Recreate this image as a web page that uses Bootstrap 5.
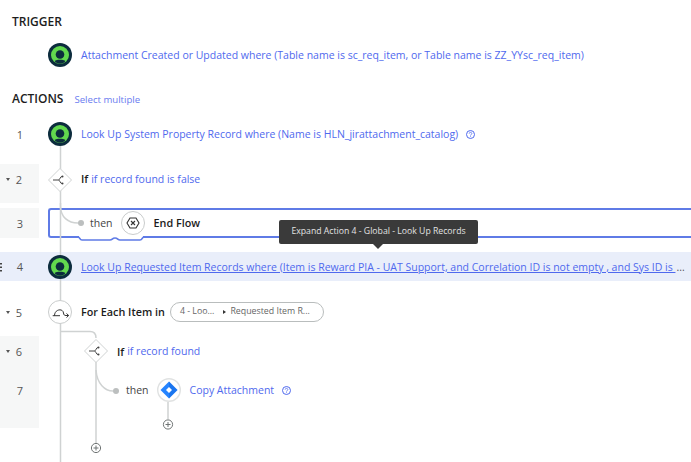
<!DOCTYPE html>
<html lang="en">
<head>
<meta charset="utf-8">
<title>Flow</title>
<link rel="stylesheet" href="https://cdn.jsdelivr.net/npm/bootstrap@5.3.0/dist/css/bootstrap.min.css">
<style>
html,body{width:691px;height:462px;overflow:hidden;background:#fff}
body{font-family:"Open Sans","Liberation Sans",sans-serif;font-size:10.5px;color:#2a2a2a}
.flow-page{width:691px;height:462px;overflow:hidden;padding-top:12px}
.sec-head{font-size:12px;font-weight:600;color:#1d1d1d;padding-left:12px;height:20px}
.sel-link{font-size:9.6px;color:#6a7cf0;margin-left:11px;padding-top:2px}
.flow-row{height:24px}
.num-col{width:39px;flex:none;align-self:stretch;color:#555;font-size:11px;padding-left:6px}
.caret-mark{width:7px;flex:none;display:block}
.caret-on{width:0;height:0;border-left:2.5px solid transparent;border-right:2.5px solid transparent;border-top:3px solid #555;margin-right:2px}
.num-val{width:12px;text-align:center;margin-left:1px;padding-top:2px}
.shade{background:#f6f7f7}
.node{width:24px;height:24px;flex:none;position:relative;z-index:2;display:block}
.gap-node{margin-left:9px}
.link-txt{color:#4f69ee;white-space:nowrap;margin-left:9px;padding-top:2px}
.bold-txt{font-weight:600;color:#1c1c1c;font-size:10.8px;margin-left:9px}
.if-txt{padding-top:2px}
.txt-tight{margin-left:3px}
.r-trig{margin-top:11px}.h-act{margin-top:22px}.r-1{margin-top:13px}
.r-2{margin-top:18px;height:39px}
.r-2>*{margin-bottom:8px}
.r-2>.num-col{margin-bottom:0;padding-bottom:8px}
.r-2>.link-txt,.r-2>.if-txt{padding-top:0}
.r-3{margin-top:5px;height:30px}
.r-4{margin-top:14px;height:29px;background:#e9eefa}
.r-5{margin-top:19px}
.r-6{margin-top:12px;height:30px}
.r-7{height:62px}
.r-7 .num-val,.r-7 .then-word,.r-7 .link-txt{padding-top:17px}
.r-7 .node{margin-top:12px}
.r-7 .help-ic{margin-top:20px}
.r-7 .then-word{margin-left:87px}
.r-7 .caret-mark{margin-top:20px}
.r-6 .node{margin-left:45px}
.endbox{flex:1;height:30px;margin-left:9px;border:2px solid #5f7be6;border-right:0;border-radius:3px 0 0 3px;padding-left:40px}
.endbox .if-txt{padding-top:0}
.then-word{color:#444;margin-right:8px;padding-top:2px}
.pill-ref{width:154px;height:20px;margin-left:5px;border:1px solid #b9bdbd;border-radius:10px;font-size:8.8px;color:#666;padding-left:9px;white-space:nowrap}
.tri-mark{width:0;height:0;border-top:2.5px solid transparent;border-bottom:2.5px solid transparent;border-left:3px solid #333;margin:0 4px 0 9px}
.lines{position:absolute;left:0;top:0;z-index:1}
.tip-box{position:absolute;left:279px;top:220px;width:199px;height:24px;background:#3a3a3a;border-radius:2px;color:#e2e2e2;font-size:8.7px;z-index:5;white-space:nowrap}
.tip-box::after{content:"";position:absolute;left:94px;top:24px;border:5px solid transparent;border-top-color:#3a3a3a;border-bottom:0}
.grip{position:absolute;left:0;top:263px;z-index:3;display:block}
.dots{color:#555;margin-left:1px;padding-top:2px}
.help-ic{margin-left:8px;flex:none;display:block}
</style>
</head>
<body>
<div class="flow-page position-relative">
  <svg class="lines" width="691" height="462" fill="none" stroke="#cfd2d2" stroke-width="1.5">
    <path d="M60.500 146V462"/>
    <path d="M60.500 203V206C60.500 217 68 223 78 223"/>
    <path d="M60.500 331.500H90C94 331.500 96 334 96 338"/>
    <path d="M96 360V443"/>
    <path d="M96 370C97 384 105 391 113 391"/>
    <path d="M168 402V419"/>
    <circle cx="81" cy="223" r="3" fill="#bcbfbf" stroke="none"/>
    <circle cx="116" cy="391" r="3" fill="#bcbfbf" stroke="none"/>
    <g stroke="#6f7474" stroke-width="1" fill="#fff">
      <circle cx="96" cy="448" r="4.600"/><path d="M96 445.500v5M93.500 448h5"/>
      <circle cx="168" cy="424.500" r="4.600"/><path d="M168 422v5M165.500 424.500h5"/>
    </g>
    <rect x="79" y="235.500" width="64" height="3.500" fill="#fff" stroke="none"/>
    <path d="M78 237c2 0 1.500 3 4 3h28c2.500 0 2-2 5-2s2.500 2 5 2h20c2.500 0 2-3 4-3" stroke="#5f7be6" stroke-width="1.700"/>
  </svg>

  <div class="sec-head d-flex align-items-center">TRIGGER</div>

  <div class="flow-row r-trig d-flex align-items-center">
    <div class="num-col"></div>
    <svg class="node gap-node" viewBox="0 0 24 24"><circle cx="12" cy="12" r="12" fill="#0c2c3d"/><circle cx="12" cy="12" r="9" fill="#62d84e"/><circle cx="12" cy="11.500" r="4.300" fill="#0c2c3d"/><path d="M6.500 18C9 16.300 15 16.300 17.500 18C15 21.500 9 21.500 6.500 18Z" fill="#0c2c3d"/></svg>
    <span class="link-txt">Attachment Created or Updated where (Table name is sc_req_item, or Table name is ZZ_YYsc_req_item)</span>
  </div>

  <div class="sec-head h-act d-flex align-items-center">ACTIONS<span class="sel-link fw-normal">Select multiple</span></div>

  <div class="flow-row r-1 d-flex align-items-center">
    <div class="num-col d-flex align-items-center"><span class="caret-mark"></span><span class="num-val">1</span></div>
    <svg class="node gap-node" viewBox="0 0 24 24"><circle cx="12" cy="12" r="12" fill="#0c2c3d"/><circle cx="12" cy="12" r="9" fill="#62d84e"/><circle cx="12" cy="11.500" r="4.300" fill="#0c2c3d"/><path d="M6.500 18C9 16.300 15 16.300 17.500 18C15 21.500 9 21.500 6.500 18Z" fill="#0c2c3d"/></svg>
    <span class="link-txt">Look Up System Property Record where (Name is HLN_jirattachment_catalog)</span>
    <svg class="help-ic" width="9" height="9" viewBox="0 0 9 9" fill="none" stroke="#4f69ee"><circle cx="4.500" cy="4.500" r="4"/><path d="M3.200 3.600c0-1.700 2.600-1.700 2.600 0 0 1-1.300 1-1.300 2M4.500 6.300v.8" stroke-width=".8"/></svg>
  </div>

  <div class="flow-row r-2 d-flex align-items-center">
    <div class="num-col shade d-flex align-items-center"><span class="caret-mark caret-on"></span><span class="num-val">2</span></div>
    <svg class="node gap-node" viewBox="0 0 24 24"><path d="M12 .5 23.500 12 12 23.500 .5 12Z" fill="#fff" stroke="#cfd2d2"/><path d="M5 12h5.500c1.500 0 1.500-3.500 3.500-3.500M10.500 12c1.500 0 1.500 3.500 3.500 3.500" fill="none" stroke="#444" stroke-width="1"/><circle cx="14.500" cy="8.500" r="1" fill="#444"/><circle cx="14.500" cy="15.500" r="1" fill="#444"/></svg>
    <span class="bold-txt if-txt">If</span><span class="link-txt txt-tight">if record found is false</span>
  </div>

  <div class="flow-row r-3 d-flex align-items-center">
    <div class="num-col shade d-flex align-items-center"><span class="caret-mark"></span><span class="num-val">3</span></div>
    <div class="endbox d-flex align-items-center">
      <span class="then-word">then</span>
      <svg class="node" viewBox="0 0 24 24"><circle cx="12" cy="12" r="11.500" fill="#fff" stroke="#c9cccc"/><path d="M9 7h6l3 5-3 5H9l-3-5Z" fill="none" stroke="#333" stroke-width="1.100"/><path d="M10 10l4 4M14 10l-4 4" stroke="#333" stroke-width="1.100"/></svg>
      <span class="bold-txt if-txt">End Flow</span>
    </div>
  </div>

  <div class="flow-row r-4 d-flex align-items-center">
    <div class="num-col d-flex align-items-center"><span class="caret-mark"></span><span class="num-val">4</span></div>
    <svg class="node gap-node" viewBox="0 0 24 24"><circle cx="12" cy="12" r="12" fill="#0c2c3d"/><circle cx="12" cy="12" r="9" fill="#62d84e"/><circle cx="12" cy="11.500" r="4.300" fill="#0c2c3d"/><path d="M6.500 18C9 16.300 15 16.300 17.500 18C15 21.500 9 21.500 6.500 18Z" fill="#0c2c3d"/></svg>
    <span class="link-txt text-decoration-underline">Look Up Requested Item Records where (Item is Reward PIA - UAT Support, and Correlation ID is not empty , and Sys ID is&nbsp;</span><span class="dots">...</span>
  </div>

  <div class="flow-row r-5 d-flex align-items-center">
    <div class="num-col d-flex align-items-center"><span class="caret-mark caret-on"></span><span class="num-val">5</span></div>
    <svg class="node gap-node" viewBox="0 0 24 24"><circle cx="12" cy="12" r="11.500" fill="#fff" stroke="#c9cccc"/><path d="M4.700 15.700H12M6.500 15.700C6.500 9 15 8 15.500 13C15.700 15 16.500 15.500 18 15.500H20.500M18.500 13.500l2.200 2-2.200 2" fill="none" stroke="#333" stroke-width="1"/></svg>
    <span class="bold-txt">For Each Item in</span>
    <span class="pill-ref d-flex align-items-center">4 - Loo...<span class="tri-mark"></span>Requested Item R...</span>
  </div>

  <div class="flow-row r-6 d-flex align-items-center">
    <div class="num-col shade d-flex align-items-center"><span class="caret-mark caret-on"></span><span class="num-val">6</span></div>
    <svg class="node" viewBox="0 0 24 24"><path d="M12 .5 23.500 12 12 23.500 .5 12Z" fill="#fff" stroke="#cfd2d2"/><path d="M5 12h5.500c1.500 0 1.500-3.500 3.500-3.500M10.500 12c1.500 0 1.500 3.500 3.500 3.500" fill="none" stroke="#444" stroke-width="1"/><circle cx="14.500" cy="8.500" r="1" fill="#444"/><circle cx="14.500" cy="15.500" r="1" fill="#444"/></svg>
    <span class="bold-txt if-txt">If</span><span class="link-txt txt-tight">if record found</span>
  </div>

  <div class="flow-row r-7 d-flex align-items-start">
    <div class="num-col shade d-flex align-items-start"><span class="caret-mark"></span><span class="num-val">7</span></div>
    <span class="then-word">then</span>
    <svg class="node" viewBox="0 0 24 24"><circle cx="12" cy="12" r="11.300" fill="#fff" stroke="#e0e2e2" stroke-width="1.400"/><path d="M12 3.500 20.500 12 12 20.500 3.500 12Z" fill="#2684ff"/><path d="M12 3.500 20.500 12 12 20.500Z" fill="#0b5fd8" opacity=".4"/><path d="M12 9 15 12 12 15 9 12Z" fill="#fff"/></svg>
    <span class="link-txt">Copy Attachment</span>
    <svg class="help-ic" width="9" height="9" viewBox="0 0 9 9" fill="none" stroke="#4f69ee"><circle cx="4.500" cy="4.500" r="4"/><path d="M3.200 3.600c0-1.700 2.600-1.700 2.600 0 0 1-1.300 1-1.300 2M4.500 6.300v.8" stroke-width=".8"/></svg>
  </div>

  <svg class="grip" width="3" height="9" viewBox="0 0 3 9" fill="#444"><rect width="2" height="1.500" y="0"/><rect width="2" height="1.500" y="3.500"/><rect width="2" height="1.500" y="7"/></svg>
  <div class="tip-box d-flex align-items-center justify-content-center">Expand Action 4 - Global - Look Up Records</div>
</div>
<script src="https://cdn.jsdelivr.net/npm/bootstrap@5.3.0/dist/js/bootstrap.bundle.min.js"></script>
</body>
</html>
